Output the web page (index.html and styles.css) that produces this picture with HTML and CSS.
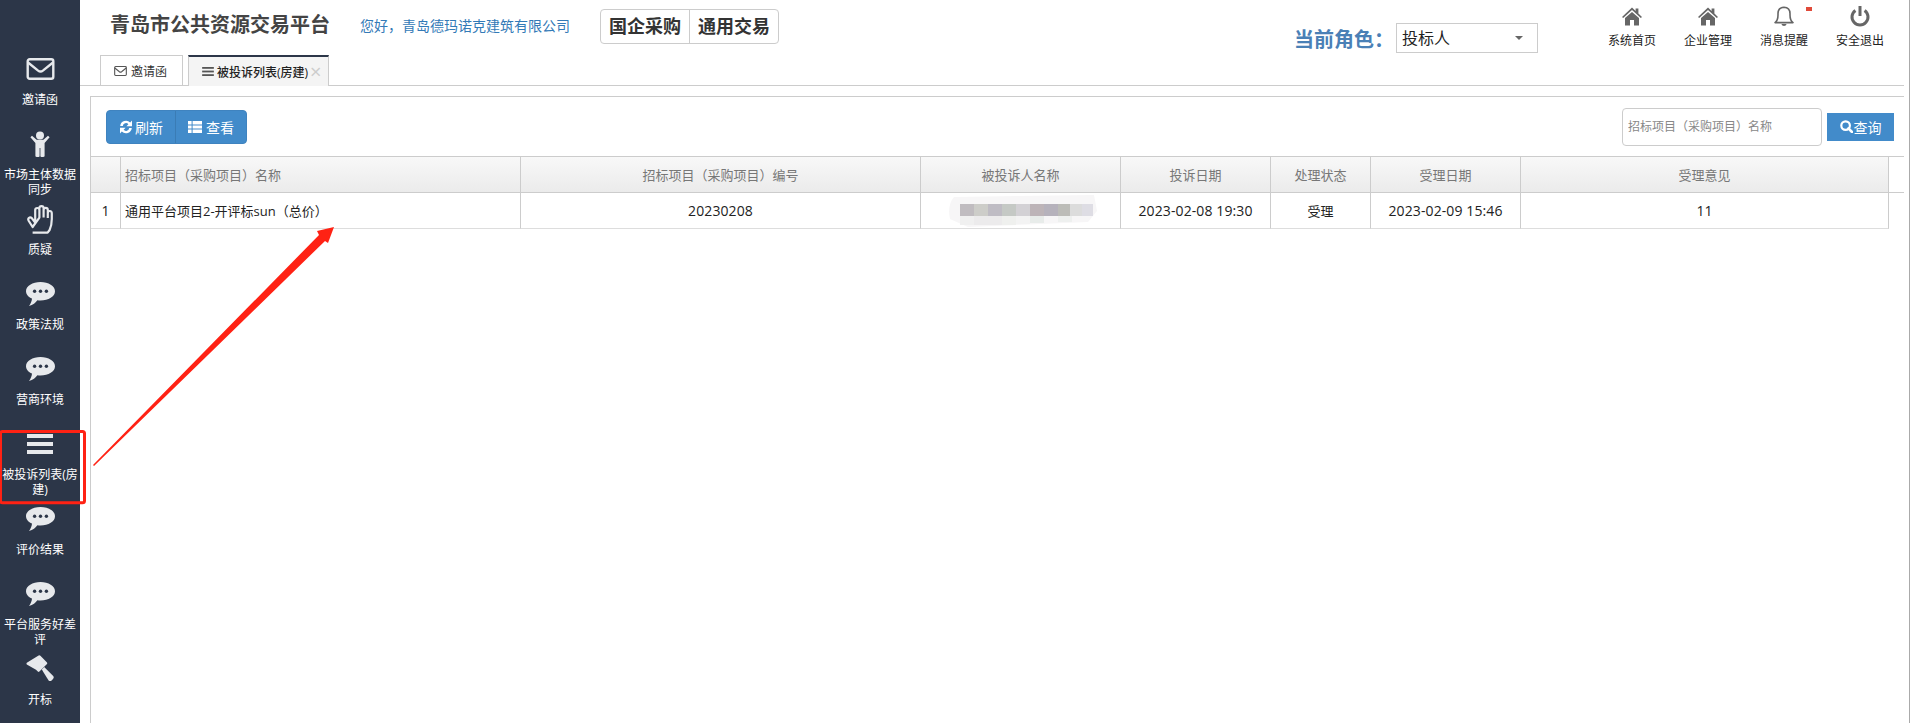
FILE: index.html
```html
<!DOCTYPE html>
<html>
<head>
    <meta charset="utf-8">
    <title>青岛市公共资源交易平台</title>
    <link rel="stylesheet" href="styles.css">
</head>
<body>
    <svg class="sprite" xmlns="http://www.w3.org/2000/svg">
        <symbol id="i-mail" viewBox="0 0 28 22">
            <rect x="1.2" y="1.2" width="25.6" height="19.6" rx="2" fill="none" stroke="currentColor" stroke-width="2.4"/>
            <path d="M1.5 4.5 L11.6 12.6 Q14 14.4 16.4 12.6 L26.5 4.5" fill="none" stroke="currentColor" stroke-width="2.4"/>
        </symbol>
        <symbol id="i-male" viewBox="0 0 20 26">
            <circle cx="10" cy="4.4" r="4"/>
            <path d="M0.4 6.2 L2 4.8 L6.6 8.8 H13.4 L18 4.8 L19.6 6.2 L14.6 12 V25 Q14.6 26 13 26 H11.4 Q10.4 26 10.4 25 V17 H9.6 V25 Q9.6 26 8.6 26 H7 Q5.4 26 5.4 25 V12 Z"/>
        </symbol>
        <symbol id="i-hand" viewBox="0 0 26 29">
            <path d="M5.6 27.6 H20.6 L22.6 25 Q24.8 20 24.8 14 V8.4 Q24.8 6 22.8 6 Q20.8 6 20.8 8.4 V13 M20.8 13 V5 Q20.8 2.8 18.7 2.8 Q16.6 2.8 16.6 5 V12.6 M16.6 12.6 V3 Q16.6 1.2 14.5 1.2 Q12.4 1.2 12.4 3 V12.6 M12.4 12.6 V5 Q12.4 3 10.3 3 Q8.2 3 8.2 5 V17.6 L5 13.4 Q3.4 11.8 2 12.8 Q0.6 14 1.8 16 L5.6 22 Z" fill="none" stroke="currentColor" stroke-width="2.2" stroke-linejoin="round"/>
        </symbol>
        <symbol id="i-talk" viewBox="0 0 29 24">
            <path d="M14.5 0 C22.5 0 29 4 29 9.2 C29 14.4 22.5 18.4 14.5 18.4 C13.4 18.4 12.4 18.4 11.4 18.2 C9.6 20.6 7 23 3 24 C4.8 21.6 5.8 19.4 6 16.6 C2.4 15 0 12.2 0 9.2 C0 4 6.5 0 14.5 0 Z"/>
            <circle class="talk-dot" cx="8.6" cy="9.2" r="1.7"/>
            <circle class="talk-dot" cx="14.5" cy="9.2" r="1.7"/>
            <circle class="talk-dot" cx="20.4" cy="9.2" r="1.7"/>
        </symbol>
        <symbol id="i-bars" viewBox="0 0 26 20">
            <rect y="0" width="26" height="4"/>
            <rect y="8" width="26" height="4"/>
            <rect y="16" width="26" height="4"/>
        </symbol>
        <symbol id="i-gavel" viewBox="0 0 28 28">
            <path d="M12.6 0.6 Q13.6 0 14.4 0.8 L21 7.4 Q21.6 8.2 21 9 L13.4 16.6 Q12.6 17.2 11.8 16.6 L10 14.8 L0.8 9.6 Q0 8.8 0.8 7.8 Z"/>
            <path d="M15.8 14.4 L18.2 12 L27.2 21 Q28.4 22.4 27 24 L25.6 25.4 Q24 26.6 22.6 25.4 Z"/>
        </symbol>
        <symbol id="i-refresh" viewBox="0 0 14 14">
            <path d="M1.2 6 A5.9 5.9 0 0 1 11.2 2.4 L13 0.6 V6.2 H7.4 L9.4 4.2 A3.2 3.2 0 0 0 3.8 6 Z"/>
            <path d="M12.8 8 A5.9 5.9 0 0 1 2.8 11.6 L1 13.4 V7.8 H6.6 L4.6 9.8 A3.2 3.2 0 0 0 10.2 8 Z"/>
        </symbol>
        <symbol id="i-list" viewBox="0 0 14 12">
            <path d="M0 0 H3.6 V3.4 H0 Z M4.6 0 H14 V3.4 H4.6 Z M0 4.4 H3.6 V7.6 H0 Z M4.6 4.4 H14 V7.6 H4.6 Z M0 8.6 H3.6 V12 H0 Z M4.6 8.6 H14 V12 H4.6 Z"/>
        </symbol>
        <symbol id="i-search" viewBox="0 0 13 13">
            <circle cx="5.6" cy="5.6" r="4.3" fill="none" stroke="currentColor" stroke-width="2.2"/>
            <path d="M8.4 8.4 L12 12" fill="none" stroke="currentColor" stroke-width="2.6" stroke-linecap="round"/>
        </symbol>
        <symbol id="i-home" viewBox="0 0 20 18">
            <path d="M10 0 L13.6 3.4 V1 H16.4 V6 L20 9.4 L18.8 10.6 L10 2.6 L1.2 10.6 L0 9.4 Z"/>
            <path d="M3 10.6 L10 4.4 L17 10.6 V18 H12 V12.4 H8 V18 H3 Z"/>
        </symbol>
        <symbol id="i-bell" viewBox="0 0 20 21">
            <path d="M1 16.6 Q4 14.6 4 9 V7.6 Q4 1.4 10 1.2 Q16 1.4 16 7.6 V9 Q16 14.6 19 16.6 Z" fill="none" stroke="currentColor" stroke-width="1.6" stroke-linejoin="round"/>
            <path d="M7.4 18 A2.7 2.7 0 0 0 12.6 18 Z"/>
        </symbol>
        <symbol id="i-power" viewBox="0 0 20 21">
            <path d="M5.4 4.4 A8 8 0 1 0 14.6 4.4" fill="none" stroke="currentColor" stroke-width="3"/>
            <path d="M10 0 V10" fill="none" stroke="currentColor" stroke-width="3"/>
        </symbol>
    </svg>

    <div class="app">
        <nav class="side">
            <a class="side-item"><span class="side-icon"><svg class="ic-mail"><use href="#i-mail"/></svg></span><span class="side-label">邀请函</span></a>
            <a class="side-item"><span class="side-icon"><svg class="ic-male"><use href="#i-male"/></svg></span><span class="side-label">市场主体数据同步</span></a>
            <a class="side-item"><span class="side-icon"><svg class="ic-hand"><use href="#i-hand"/></svg></span><span class="side-label">质疑</span></a>
            <a class="side-item"><span class="side-icon"><svg class="ic-talk"><use href="#i-talk"/></svg></span><span class="side-label">政策法规</span></a>
            <a class="side-item"><span class="side-icon"><svg class="ic-talk"><use href="#i-talk"/></svg></span><span class="side-label">营商环境</span></a>
            <a class="side-item"><span class="side-icon"><svg class="ic-bars"><use href="#i-bars"/></svg></span><span class="side-label">被投诉列表(房建)</span></a>
            <a class="side-item"><span class="side-icon"><svg class="ic-talk"><use href="#i-talk"/></svg></span><span class="side-label">评价结果</span></a>
            <a class="side-item"><span class="side-icon"><svg class="ic-talk"><use href="#i-talk"/></svg></span><span class="side-label">平台服务好差评</span></a>
            <a class="side-item"><span class="side-icon"><svg class="ic-gavel"><use href="#i-gavel"/></svg></span><span class="side-label">开标</span></a>
        </nav>

        <div class="main">
            <header class="top">
                <h1 class="brand">青岛市公共资源交易平台</h1>
                <span class="hello">您好，青岛德玛诺克建筑有限公司</span>
                <div class="switch">
                    <a class="switch-item">国企采购</a>
                    <a class="switch-item">通用交易</a>
                </div>
                <div class="role">
                    <span class="role-label">当前角色：</span>
                    <div class="role-select">投标人<i class="caret"></i></div>
                </div>
                <ul class="tools">
                    <li class="tool"><svg class="ic-home"><use href="#i-home"/></svg><span>系统首页</span></li>
                    <li class="tool"><svg class="ic-home"><use href="#i-home"/></svg><span>企业管理</span></li>
                    <li class="tool"><svg class="ic-bell"><use href="#i-bell"/></svg><span>消息提醒</span><i class="tool-dot"></i></li>
                    <li class="tool"><svg class="ic-power"><use href="#i-power"/></svg><span>安全退出</span></li>
                </ul>
            </header>

            <div class="tabs">
                <a class="tab"><svg class="ic-tab"><use href="#i-mail"/></svg>邀请函</a>
                <a class="tab tab-on"><svg class="ic-tab-bars"><use href="#i-bars"/></svg>被投诉列表(房建)<span class="tab-close">×</span></a>
            </div>

            <section class="panel">
                <div class="toolbar">
                    <div class="btn-group">
                        <a class="btn"><svg class="ic-btn"><use href="#i-refresh"/></svg>刷新</a>
                        <a class="btn"><svg class="ic-btn"><use href="#i-list"/></svg>查看</a>
                    </div>
                    <div class="search">
                        <input class="search-input" type="text" placeholder="招标项目（采购项目）名称">
                        <a class="search-btn"><svg class="ic-search"><use href="#i-search"/></svg>查询</a>
                    </div>
                </div>

                <div class="grid-head">
                    <table class="grid">
                        <colgroup>
                            <col class="c-no"><col class="c-name"><col class="c-code"><col class="c-who">
                            <col class="c-date"><col class="c-state"><col class="c-date"><col class="c-note">
                        </colgroup>
                        <tr>
                            <th></th>
                            <th class="left">招标项目（采购项目）名称</th>
                            <th>招标项目（采购项目）编号</th>
                            <th>被投诉人名称</th>
                            <th>投诉日期</th>
                            <th>处理状态</th>
                            <th>受理日期</th>
                            <th>受理意见</th>
                        </tr>
                    </table>
                </div>
                <table class="grid">
                    <colgroup>
                        <col class="c-no"><col class="c-name"><col class="c-code"><col class="c-who">
                        <col class="c-date"><col class="c-state"><col class="c-date"><col class="c-note">
                    </colgroup>
                    <tr>
                        <td class="num">1</td>
                        <td class="left">通用平台项目2-开评标sun（总价）</td>
                        <td class="num">20230208</td>
                        <td class="mosaic-cell">
                            <svg class="mosaic" viewBox="0 0 150 32">
                                <path d="M6 2 L146 0 L149 16 L140 27 L20 32 L2 24 Q-1 10 6 2 Z" fill="#f7f6f7"/>
                                <rect x="12" y="9" width="14" height="12" fill="#c0bcc0"/><rect x="26" y="9" width="14" height="12" fill="#cdcdc9"/>
                                <rect x="40" y="9" width="14" height="12" fill="#bfbcc4"/><rect x="54" y="9" width="14" height="12" fill="#c5c9c5"/>
                                <rect x="68" y="9" width="14" height="12" fill="#d3d1d5"/><rect x="82" y="9" width="14" height="12" fill="#bdb4b8"/>
                                <rect x="96" y="9" width="14" height="12" fill="#b6b2bc"/><rect x="110" y="9" width="12" height="12" fill="#bcbcb8"/>
                                <rect x="122" y="9" width="12" height="12" fill="#dcdcdc"/><rect x="134" y="9" width="11" height="12" fill="#dedde4"/>
                                <rect x="12" y="21" width="14" height="9" fill="#f0f0f0"/><rect x="26" y="21" width="28" height="9" fill="#ecebec"/>
                                <rect x="54" y="21" width="14" height="9" fill="#eff0ee"/><rect x="68" y="21" width="14" height="8" fill="#f3f3f3"/>
                                <rect x="82" y="21" width="14" height="7" fill="#e8ecea"/><rect x="110" y="21" width="14" height="6" fill="#eef0ef"/>
                            </svg>
                        </td>
                        <td class="num">2023-02-08 19:30</td>
                        <td>受理</td>
                        <td class="num">2023-02-09 15:46</td>
                        <td class="num">11</td>
                    </tr>
                </table>
            </section>
        </div>
    </div>

    <svg class="marks" viewBox="0 0 1910 723" xmlns="http://www.w3.org/2000/svg">
        <rect x="0.5" y="431.4" width="84" height="71.4" rx="2" fill="none" stroke="#ff2214" stroke-width="3"/>
        <polygon points="93,465 319,235 317,231 334,227 328,243 325,241 94,466" fill="#ff2214"/>
    </svg>
</body>
</html>
```

FILE: styles.css
```css
* {
    box-sizing: border-box;
}
html, body {
    margin: 0;
    height: 100%;
    overflow: hidden;
}
body {
    font-family: "Open Sans", "Noto Sans CJK SC", sans-serif;
    font-size: 13px;
    color: #333;
    background: #fff;
}
h1, ul {
    margin: 0;
    padding: 0;
}
svg {
    display: block;
    fill: currentColor;
}
.sprite {
    width: 0;
    height: 0;
    position: absolute;
}
.marks {
    position: absolute;
    left: 0;
    top: 0;
    width: 1910px;
    height: 723px;
    pointer-events: none;
}
.app {
    display: flex;
    height: 723px;
}

/* left menu */
.side {
    flex: none;
    width: 80px;
    padding-top: 54px;
    background: #2c3648;
    overflow: hidden;
}
.side-item {
    display: flex;
    flex-direction: column;
    align-items: center;
    height: 75px;
    color: #fff;
}
.side-icon {
    display: flex;
    align-items: center;
    justify-content: center;
    height: 30px;
    margin-bottom: 8px;
    color: #e7e9ec;
}
.side-label {
    font-size: 12px;
    line-height: 15px;
    text-align: center;
    width: 80px;
}
.ic-mail { width: 29px; height: 22px; }
.ic-male { width: 20px; height: 26px; }
.ic-hand { width: 26px; height: 29px; }
.ic-talk { width: 29px; height: 24px; }
.ic-bars { width: 26px; height: 20px; }
.ic-gavel { width: 28px; height: 28px; }
.talk-dot { fill: #2c3648; }

/* top bar */
.main {
    flex: 1;
    min-width: 0;
    padding-right: 5px;
    border-right: 1px solid #aaa;
}
.top {
    display: flex;
    align-items: flex-start;
    height: 55px;
    padding: 0 6px 0 30px;
}
.brand {
    font-size: 20px;
    line-height: 26px;
    margin-top: 12px;
    font-weight: bold;
    color: #444;
}
.hello {
    margin: 16px 0 0 30px;
    font-size: 14px;
    line-height: 20px;
    color: #337ab7;
}
.switch {
    display: flex;
    margin: 9px 0 0 30px;
    height: 35px;
    border: 1px solid #ccc;
    border-radius: 4px;
}
.switch-item {
    padding: 0 8px;
    font-size: 18px;
    line-height: 33px;
    font-weight: bold;
    color: #333;
}
.switch-item + .switch-item {
    border-left: 1px solid #ccc;
}
.role {
    display: flex;
    align-items: center;
    margin: 23px 0 0 auto;
}
.role-label {
    width: 102px;
    font-size: 20px;
    font-weight: bold;
    color: #4a80b6;
}
.role-select {
    position: relative;
    width: 142px;
    height: 30px;
    padding-left: 5px;
    border: 1px solid #ccc;
    font-size: 16px;
    line-height: 28px;
    color: #222;
}
.caret {
    position: absolute;
    right: 14px;
    top: 12px;
    border: 4px solid transparent;
    border-top: 4px solid #666;
}
.tools {
    display: flex;
    margin-left: 56px;
    list-style: none;
}
.tool {
    position: relative;
    display: flex;
    flex-direction: column;
    align-items: center;
    width: 76px;
    padding-top: 6px;
    font-size: 12px;
    color: #222;
}
.tool svg {
    color: #666;
    height: 21px;
    margin-bottom: 6px;
}
.tool span {
    line-height: 16px;
}
.ic-home { width: 20px; }
.ic-bell { width: 20px; }
.ic-power { width: 20px; }
.tool-dot {
    position: absolute;
    left: 60px;
    top: 7px;
    width: 6px;
    height: 4px;
    background: #e04a3a;
}

/* tabs */
.tabs {
    display: flex;
    gap: 5px;
    height: 31px;
    padding-left: 20px;
    border-bottom: 1px solid #ccc;
}
.tab {
    display: flex;
    align-items: center;
    height: 30px;
    padding: 0 15px 0 13px;
    border: 1px solid #ccc;
    border-bottom: none;
    font-size: 12px;
    color: #333;
}
.tab-on {
    position: relative;
    width: 141px;
    padding: 0 0 0 13px;
    border-top: 2px solid #2c3648;
    background: #f4f4f4;
    color: #222;
    font-weight: 500;
    height: 31px;
}
.tab-close {
    margin-left: 2px;
    font-size: 20px;
    font-weight: normal;
    line-height: 20px;
    color: #ccc;
}
.ic-tab {
    width: 13px;
    height: 10px;
    margin-right: 4px;
    color: #555;
}
.ic-tab-bars {
    width: 12px;
    height: 9px;
    margin-right: 3px;
    color: #555;
}

/* panel */
.panel {
    height: 627px;
    margin: 10px 0 0 10px;
    border-top: 1px solid #ccc;
    border-left: 1px solid #ccc;
}
.toolbar {
    display: flex;
    align-items: center;
    justify-content: space-between;
    height: 59px;
    padding: 0 10px 0 15px;
}
.btn-group {
    display: flex;
    height: 34px;
    background: #428bca;
    border: 1px solid #3f83bf;
    border-radius: 4px;
}
.btn {
    display: flex;
    align-items: center;
    padding: 0 12px;
    font-size: 14px;
    color: #fff;
}
.btn + .btn {
    border-left: 1px solid #3a7cb5;
}
.ic-btn {
    width: 14px;
    height: 14px;
    margin-right: 2px;
}
.btn + .btn .ic-btn {
    margin-right: 4px;
}
.search {
    display: flex;
    align-items: center;
    gap: 5px;
}
.search-input {
    width: 200px;
    height: 38px;
    padding: 0 5px;
    border: 1px solid #ccc;
    border-radius: 4px;
    font-family: inherit;
    font-size: 12px;
    outline: none;
}
.search-input::placeholder {
    color: #888;
}
.search-btn {
    display: flex;
    align-items: center;
    justify-content: center;
    width: 67px;
    height: 28px;
    background: #428bca;
    font-size: 14px;
    color: #fff;
}
.ic-search {
    width: 13px;
    height: 13px;
    margin-right: 1px;
}

/* table */
.grid-head {
    border-top: 1px solid #ccc;
    border-bottom: 1px solid #ccc;
}
.grid {
    table-layout: fixed;
    width: 1798px;
    border-spacing: 0;
}
.grid th, .grid td {
    padding: 0;
    text-align: center;
    overflow: hidden;
    white-space: nowrap;
    border-right: 1px solid #ccc;
}
.grid th {
    height: 35px;
    font-weight: normal;
    color: #777;
    background: linear-gradient(#f8f8f8, #ebebeb);
}
.grid td {
    height: 36px;
    color: #222;
    border-bottom: 1px solid #ddd;
}
.grid .left {
    text-align: left;
    padding-left: 4px;
}
.grid .num {
    font-size: 14px;
    letter-spacing: 0.1px;
}
.c-no { width: 30px; }
.c-name { width: 400px; }
.c-code { width: 400px; }
.c-who { width: 200px; }
.c-date { width: 150px; }
.c-state { width: 100px; }
.c-note { width: 368px; }
.grid .mosaic-cell {
    padding-left: 4px;
}
.mosaic {
    width: 150px;
    height: 32px;
    margin: 0 auto;
}
```
